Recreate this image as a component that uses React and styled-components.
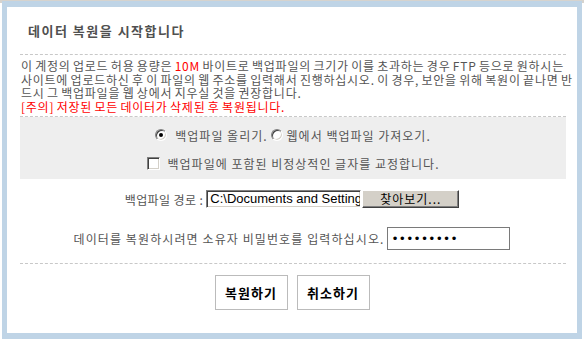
import React from 'react'
import styled, { createGlobalStyle } from 'styled-components'

const GlobalStyle = createGlobalStyle`
    html, body {
        margin: 0;
        padding: 0;
        background: #ffffff;
        overflow: hidden;
    }
    body {
        font-family: "Noto Sans CJK KR", sans-serif;
    }
`

const App = () => {
    return (
        <Page>
            <GlobalStyle />
            <Backdrop>
                <BackdropBand />
            </Backdrop>
            <Dialog>
                <Header>
                    <Title>데이터 복원을 시작합니다</Title>
                </Header>
                <Divider />
                <Notice>
                    이 계정의 업로드 허용 용량은 <Red>10M</Red> 바이트로 백업파일의 크기가 이를 초과하는 경우 FTP 등으로 원하시는<br />
                    사이트에 업로드하신 후 이 파일의 웹 주소를 입력해서 진행하십시오. 이 경우, 보안을 위해 복원이 끝나면 반<br />
                    드시 그 백업파일을 웹 상에서 지우실 것을 권장합니다.<br />
                    <Red>[주의] 저장된 모든 데이터가 삭제된 후 복원됩니다.</Red>
                </Notice>
                <Divider $top={3} />
                <OptionBox>
                    <OptionRow>
                        <Radio $checked><Dot /></Radio>
                        <OptionLabel $gap={3}>백업파일 올리기.</OptionLabel>
                        <Radio />
                        <OptionLabel $lead={4}>웹에서 백업파일 가져오기.</OptionLabel>
                    </OptionRow>
                    <OptionRow>
                        <Checkbox />
                        <OptionLabel>백업파일에 포함된 비정상적인 글자를 교정합니다.</OptionLabel>
                    </OptionRow>
                </OptionBox>
                <FileRow>
                    <FieldLabel>백업파일 경로 :</FieldLabel>
                    <FileInput>C:\Documents and Settings\Administrator\바탕 화면\backup.xml</FileInput>
                    <BrowseButton>찾아보기...</BrowseButton>
                </FileRow>
                <PasswordRow>
                    <FieldLabel $spacing={1.1}>데이터를 복원하시려면 소유자 비밀번호를 입력하십시오.</FieldLabel>
                    <PasswordInput type="password" defaultValue="123456789" readOnly />
                </PasswordRow>
                <Divider $top={13} />
                <Actions>
                    <ActionButton>복원하기</ActionButton>
                    <ActionButton>취소하기</ActionButton>
                </Actions>
            </Dialog>
        </Page>
    )
}

export default App

const Page = styled.div`
    position: relative;
    width: 584px;
    height: 339px;
    overflow: hidden;
    background: #ffffff;
`
const Backdrop = styled.div`
    width: 100%;
    height: 100%;
`
const BackdropBand = styled.div`
    height: 3px;
    background: #d6d3ce;
`
const Dialog = styled.div`
    position: absolute;
    left: 2px;
    top: 1px;
    width: 580px;
    height: 338px;
    box-sizing: border-box;
    border: 5px solid #bfd4e6;
    border-top-width: 6px;
    border-bottom-width: 6px;
    background: #ffffff;
    display: flex;
    flex-direction: column;
    color: #555555;
    font-size: 12px;
`
const Header = styled.div`
    height: 47px;
    display: flex;
    align-items: center;
    padding-left: 21px;
`
const Title = styled.h1`
    margin: 0;
    font-size: 13px;
    font-weight: 700;
    letter-spacing: 1.5px;
    color: #505050;
    line-height: 1;
`
const Divider = styled.div`
    margin: ${p => p.$top || 0}px 11px 0 13px;
    border-top: 1px dashed #c8c8c8;
`
const Notice = styled.p`
    margin: 4px 0 0;
    padding-left: 14px;
    line-height: 13.5px;
    white-space: nowrap;
    letter-spacing: 0.75px;
    word-spacing: -1px;
`
const Red = styled.span`
    color: #ff0000;
`
const OptionBox = styled.div`
    margin: 0 11px 0 13px;
    height: 62px;
    box-sizing: border-box;
    padding: 8px 0 6px;
    background: #eeeeee;
    display: flex;
    flex-direction: column;
    gap: 8px;
`
const OptionRow = styled.div`
    height: 20px;
    display: flex;
    align-items: center;
    justify-content: center;
`
const OptionLabel = styled.span`
    margin-left: ${p => p.$lead || 8}px;
    margin-right: ${p => p.$gap || 0}px;
    letter-spacing: 1px;
    white-space: nowrap;
`
const Radio = styled.span`
    width: 12px;
    height: 12px;
    box-sizing: border-box;
    border-radius: 50%;
    border: 1px solid;
    border-color: #808080 #ffffff #ffffff #808080;
    box-shadow: inset 1px 1px 0 #404040, inset -1px -1px 0 #d4d0c8;
    background: #ffffff;
    display: inline-flex;
    align-items: center;
    justify-content: center;
`
const Dot = styled.span`
    width: 4px;
    height: 4px;
    border-radius: 50%;
    background: #000000;
`
const Checkbox = styled.span`
    width: 13px;
    height: 13px;
    box-sizing: border-box;
    border: 1px solid;
    border-color: #808080 #ffffff #ffffff #808080;
    box-shadow: inset 1px 1px 0 #404040, inset -1px -1px 0 #d4d0c8;
    background: #ffffff;
`
const FileRow = styled.div`
    margin-top: 11px;
    height: 18px;
    display: flex;
    align-items: center;
    justify-content: center;
`
const FieldLabel = styled.span`
    margin-right: 3px;
    letter-spacing: ${p => p.$spacing ?? 0.4}px;
    white-space: nowrap;
`
const FileInput = styled.div`
    width: 155px;
    height: 18px;
    box-sizing: border-box;
    padding: 1px 0 0 3px;
    border: 1px solid;
    border-color: #808080 #ffffff #ffffff #808080;
    box-shadow: inset 1px 1px 0 #404040, inset -1px -1px 0 #d4d0c8;
    background: #ffffff;
    color: #000000;
    font-family: "Liberation Sans", sans-serif;
    font-size: 13px;
    line-height: 14px;
    white-space: nowrap;
    overflow: hidden;
`
const BrowseButton = styled.button`
    width: 97px;
    height: 18px;
    margin-left: 1px;
    padding: 0;
    border: 1px solid;
    border-color: #ffffff #404040 #404040 #ffffff;
    box-shadow: inset -1px -1px 0 #808080;
    background: #d4d0c8;
    color: #000000;
    font-family: "Noto Sans CJK KR", sans-serif;
    font-size: 12px;
    letter-spacing: 1px;
    line-height: 14px;
`
const PasswordRow = styled.div`
    margin-top: 19px;
    height: 23px;
    display: flex;
    align-items: center;
    justify-content: center;
`
const PasswordInput = styled.input`
    width: 123px;
    height: 23px;
    box-sizing: border-box;
    margin: 0;
    padding: 0 3px;
    border: 1px solid #7a7a7a;
    background: #ffffff;
    color: #000000;
    font-family: "DejaVu Sans", sans-serif;
    font-size: 12px;
    letter-spacing: 0.3px;
    outline: none;
`
const Actions = styled.div`
    margin-top: 11px;
    display: flex;
    justify-content: center;
    gap: 9px;
`
const ActionButton = styled.button`
    width: 73px;
    height: 35px;
    padding: 0;
    border: 1px solid #bbbbbb;
    background: #ffffff;
    color: #000000;
    font-family: "Noto Sans CJK KR", sans-serif;
    font-size: 13px;
    font-weight: 700;
    letter-spacing: 1px;
`
